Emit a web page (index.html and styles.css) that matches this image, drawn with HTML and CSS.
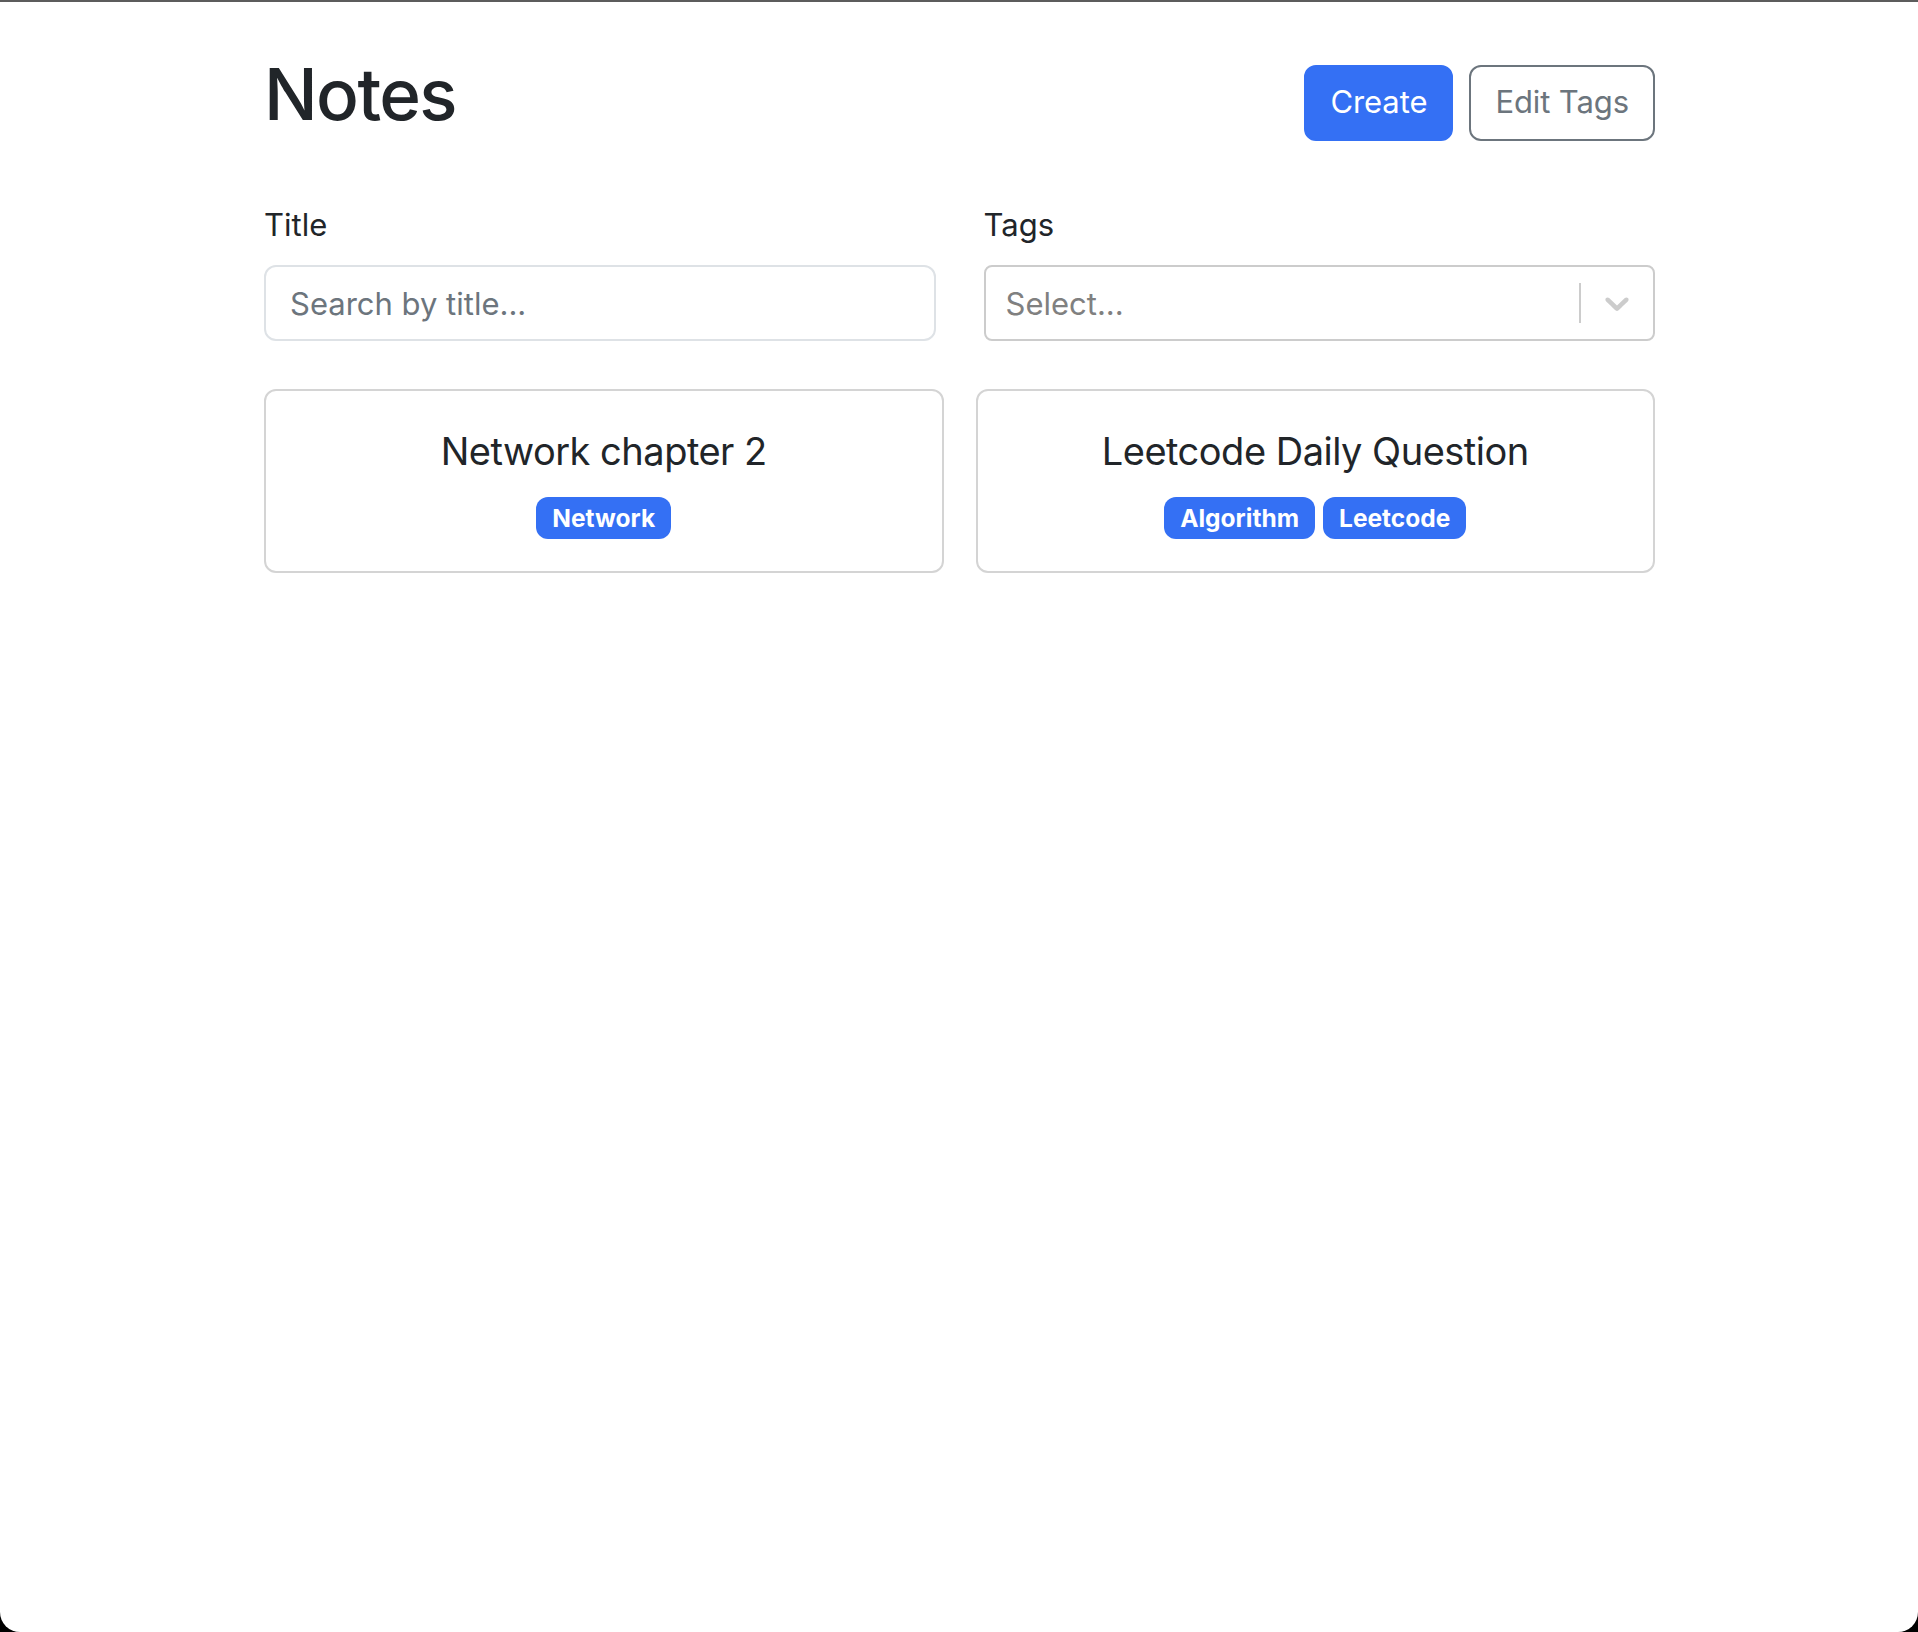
FILE: index.html
```html
<!DOCTYPE html>
<html lang="en">
<head>
<meta charset="utf-8">
<title>Notes</title>
<link rel="stylesheet" href="styles.css">
</head>
<body>
<div class="window">
  <main class="container">
    <header class="page-head">
      <h1 class="page-title">Notes</h1>
      <div class="actions">
        <button class="btn btn-primary" type="button">Create</button>
        <button class="btn btn-outline" type="button">Edit Tags</button>
      </div>
    </header>

    <form class="filters">
      <div class="field">
        <label class="field-label" for="title">Title</label>
        <input class="field-input" id="title" type="text" placeholder="Search by title...">
      </div>
      <div class="field">
        <label class="field-label">Tags</label>
        <div class="select">
          <div class="select-value">Select...</div>
          <div class="select-indicators">
            <span class="select-sep"></span>
            <span class="select-arrow">
              <svg viewBox="0 0 20 20" width="40" height="40" aria-hidden="true"><path fill="currentColor" d="M4.516 7.548c0.436-0.446 1.043-0.481 1.576 0l3.908 3.747 3.908-3.747c0.533-0.481 1.141-0.446 1.574 0 0.436 0.445 0.408 1.197 0 1.615-0.406 0.418-4.695 4.502-4.695 4.502-0.217 0.223-0.502 0.335-0.787 0.335s-0.57-0.112-0.789-0.335c0 0-4.287-4.084-4.695-4.502s-0.436-1.170 0-1.615z"/></svg>
            </span>
          </div>
        </div>
      </div>
    </form>

    <section class="cards">
      <article class="card">
        <span class="card-title">Network chapter 2</span>
        <div class="badges">
          <span class="badge">Network</span>
        </div>
      </article>
      <article class="card">
        <span class="card-title">Leetcode Daily Question</span>
        <div class="badges">
          <span class="badge">Algorithm</span>
          <span class="badge">Leetcode</span>
        </div>
      </article>
    </section>
  </main>
</div>
</body>
</html>
```

FILE: styles.css
```css
html, body {
  margin: 0;
  padding: 0;
  background: #000;
}

.window {
  box-sizing: border-box;
  min-height: 100vh;
  background: #fff;
  border-top: 2px solid #5c5c5c;
  border-radius: 0 0 20px 20px;
  font-family: "Inter", "Noto Sans", sans-serif;
  color: #212529;
  overflow: hidden;
}

.container {
  width: 1391px;
  margin: 50px 0 0 calc(50% - 695px);
}

.page-head {
  display: flex;
  align-items: center;
  justify-content: space-between;
  margin-bottom: 48px;
}

.page-title {
  margin: 0 0 16px;
  font-size: 71px;
  font-weight: 500;
  line-height: 1.2;
  letter-spacing: -1.6px;
}

.actions {
  display: flex;
  gap: 16px;
}

.btn {
  box-sizing: border-box;
  height: 76px;
  padding: 12px 24px;
  font-family: inherit;
  font-size: 31px;
  line-height: 1.5;
  letter-spacing: -0.1px;
  border: 2px solid transparent;
  border-radius: 12px;
  background: transparent;
  cursor: pointer;
}

.btn-primary {
  background: #3470f4;
  border-color: #3470f4;
  color: #fff;
}

.btn-outline {
  border-color: #6c757d;
  color: #6c757d;
}

.filters {
  display: grid;
  grid-template-columns: 1fr 1fr;
  column-gap: 48px;
  margin: 0 0 48px;
}

.field {
  display: flex;
  flex-direction: column;
}

.field-label {
  font-size: 31px;
  line-height: 48px;
  margin-bottom: 16px;
}

.field-input {
  box-sizing: border-box;
  height: 76px;
  padding: 12px 24px;
  font-family: inherit;
  font-size: 31px;
  color: #212529;
  border: 2px solid #dee2e6;
  border-radius: 12px;
  outline: none;
}

.field-input::placeholder {
  color: #6c757d;
}

.select {
  box-sizing: border-box;
  height: 76px;
  display: flex;
  align-items: center;
  border: 2px solid #cccccc;
  border-radius: 8px;
}

.select-value {
  flex: 1;
  padding: 0 20px;
  font-size: 31px;
  color: #808080;
}

.select-indicators {
  display: flex;
  align-items: center;
  align-self: stretch;
}

.select-sep {
  width: 2px;
  align-self: stretch;
  margin: 16px 0;
  background: #cccccc;
}

.select-arrow {
  display: flex;
  padding: 16px;
  color: #cccccc;
}

.cards {
  display: grid;
  grid-template-columns: 1fr 1fr;
  gap: 32px;
}

.card {
  box-sizing: border-box;
  height: 184px;
  padding: 30px;
  display: flex;
  flex-direction: column;
  align-items: center;
  justify-content: center;
  gap: 17px;
  border: 2px solid #d4d4d4;
  border-radius: 12px;
}

.card-title {
  font-size: 38px;
  line-height: 1.5;
  letter-spacing: -0.5px;
}

.badges {
  display: flex;
  flex-wrap: wrap;
  gap: 8px;
}

.badge {
  padding: 8.5px 16px;
  font-size: 24.5px;
  font-weight: 700;
  line-height: 1;
  color: #fff;
  background: #3470f4;
  border-radius: 12px;
}
```
